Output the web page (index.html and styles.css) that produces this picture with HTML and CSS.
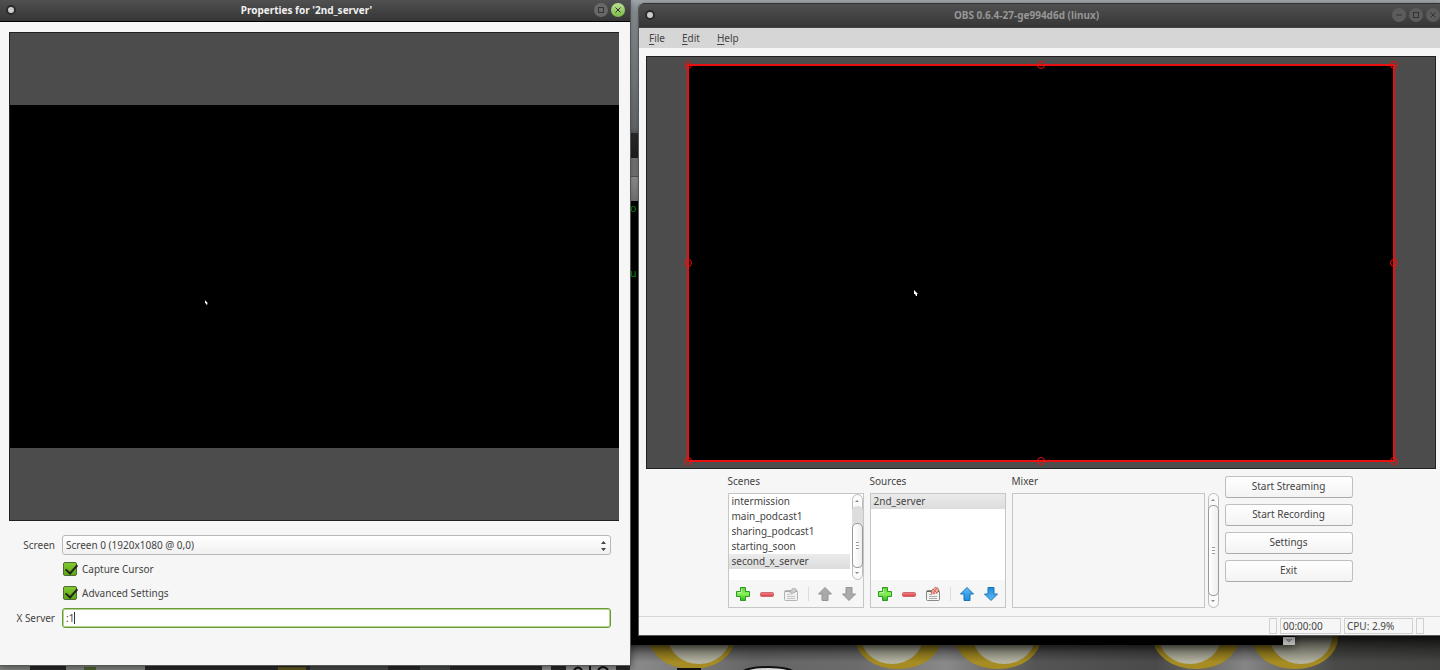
FILE: index.html
```html
<!DOCTYPE html>
<html lang="en">
<head>
<meta charset="utf-8">
<title>OBS 0.6.4-27-ge994d6d (linux)</title>
<meta name="viewport" content="width=device-width, initial-scale=1">
<link rel="stylesheet" href="styles.css">
</head>
<body>
<svg width="0" height="0" class="defs" aria-hidden="true">
  <defs>
    <linearGradient id="green" x1="0" y1="0" x2="0" y2="1"><stop offset="0" stop-color="#5fd23a"/><stop offset=".5" stop-color="#8af05a"/><stop offset="1" stop-color="#2fb81c"/></linearGradient>
    <linearGradient id="red" x1="0" y1="0" x2="0" y2="1"><stop offset="0" stop-color="#f08a8a"/><stop offset="1" stop-color="#dc3a40"/></linearGradient>
    <linearGradient id="blue" x1="0" y1="0" x2="0" y2="1"><stop offset="0" stop-color="#5cbcf4"/><stop offset="1" stop-color="#1d8be0"/></linearGradient>
    <symbol id="plus" viewBox="0 0 16 16"><path d="M5.500 1.500h5v4h4v5h-4v4h-5v-4h-4v-5h4z" fill="url(#green)" stroke="#2c9a20"/><path d="M6.500 3v3.500H3" fill="none" stroke="#b5f79a"/></symbol>
    <symbol id="minus" viewBox="0 0 16 16"><rect x="1.500" y="6.500" width="13" height="4" rx="1" fill="url(#red)" stroke="#cf6a70"/></symbol>
    <symbol id="props" viewBox="0 0 16 16"><rect x="1.500" y="4.500" width="13" height="10" rx="1" fill="#f3f3f3" stroke="#888"/><path d="M2 5.500h12" stroke="#666"/><path d="M4 8.500h3M4 10.500h8M4 12.500h8" stroke="#aaa"/><path d="M6 7l2-4 3-2 3 2-2 4-4 1z" fill="#f3b5a5" stroke="#b5624c" stroke-dasharray="2 1"/><path d="M8 3l4 4M12 2L8 7" stroke="#d9604c"/></symbol>
    <symbol id="props-off" viewBox="0 0 16 16"><rect x="1.500" y="4.500" width="13" height="10" rx="1" fill="#f1f1f1" stroke="#b4b4b4"/><path d="M2 5.500h12" stroke="#aaa"/><path d="M4 8.500h3M4 10.500h8M4 12.500h8" stroke="#c4c4c4"/><path d="M7 6l2-3 2-1 3 2-3 3-3 1z" fill="#ccc" stroke="#a4a4a4" stroke-dasharray="2 1"/></symbol>
    <symbol id="arrow" viewBox="0 0 16 16"><path d="M8 1.500L14.500 8H11v6.500H5V8H1.500z"/></symbol>
  </defs>
</svg>

<main class="desktop">
  <svg class="wallpaper" viewBox="0 0 1440 670" preserveAspectRatio="xMidYMax slice" aria-hidden="true">
    <defs>
      <linearGradient id="wall" x1="0" x2="0" y1="0" y2="1"><stop offset="0" stop-color="#a4acb2"/><stop offset=".2" stop-color="#747a80"/><stop offset="1" stop-color="#686868"/></linearGradient>
      <linearGradient id="floor" x1="630" x2="1440" y1="0" y2="0" gradientUnits="userSpaceOnUse"><stop offset="0" stop-color="#8d8c8d"/><stop offset=".15" stop-color="#666"/><stop offset=".28" stop-color="#6b6b6b"/><stop offset=".39" stop-color="#8a898a"/><stop offset=".5" stop-color="#555"/><stop offset=".65" stop-color="#4a4a4a"/><stop offset=".76" stop-color="#858585"/><stop offset=".87" stop-color="#4a4a48"/><stop offset="1" stop-color="#444442"/></linearGradient>
      <linearGradient id="shade" x1="0" x2="0" y1="0" y2="1"><stop offset="0" stop-color="#000" stop-opacity=".7"/><stop offset="1" stop-color="#000" stop-opacity="0"/></linearGradient>
    </defs>
    <rect width="1440" height="670" fill="url(#wall)"/>
    <rect x="630" y="636" width="810" height="34" fill="url(#floor)"/>
    <g fill="#a68c22">
      <ellipse cx="692" cy="638" rx="43" ry="31"/><ellipse cx="898" cy="638" rx="43" ry="31"/><ellipse cx="998" cy="638" rx="43" ry="31"/><ellipse cx="1196" cy="638" rx="43" ry="31"/><ellipse cx="1295" cy="638" rx="43" ry="31"/>
    </g>
    <g fill="#b4b3a1">
      <ellipse cx="699" cy="637" rx="31" ry="27"/><ellipse cx="892" cy="637" rx="31" ry="27"/><ellipse cx="1004" cy="637" rx="31" ry="27"/><ellipse cx="1190" cy="637" rx="31" ry="27"/><ellipse cx="1301" cy="637" rx="31" ry="27"/>
    </g>
    <rect x="630" y="636" width="810" height="26" fill="url(#shade)"/>
    <rect x="677" y="668" width="24" height="2" fill="#111"/>
    <ellipse cx="768" cy="673" rx="26" ry="6" fill="#ddd" stroke="#111" stroke-width="2"/>
    <rect y="664" width="630" height="6" fill="#2b2c2c"/>
    <path d="M0 666h30v4H0zM66 666h79v4H66z" fill="#8b8f8a"/><path d="M84 667h12v3H84z" fill="#536b32"/>
    <path d="M278 667h28v3h-28z" fill="#655b21"/><path d="M310 666h78v4h-78zM420 666h30v4h-30z" fill="#4c4e4e"/>
    <path d="M542 666h9v4h-9zM566 666h50v4h-50z" fill="#9a9a9a"/><path d="M574 670q4-5 8 0M590 666v4M598 670q5-6 10 0" fill="none" stroke="#111" stroke-width="2"/>
  </svg>

  <section class="terminal" aria-label="Terminal">
    <div class="terminal-title"></div>
    <div class="terminal-menu"></div>
    <div class="terminal-tabs"></div>
    <div class="terminal-screen"><span>o</span><span>u</span></div>
    <svg class="terminal-arrow" viewBox="0 0 12 8" aria-hidden="true"><rect width="12" height="8" fill="#bbb"/><path d="M3 2l3 3 3-3" fill="#888" stroke="#777"/></svg>
  </section>

  <section class="window properties" aria-labelledby="props-title">
    <header class="titlebar">
      <span class="dot"></span>
      <h1 id="props-title">Properties for '2nd_server'</h1>
      <div class="controls">
        <button type="button" class="control" aria-label="Maximize"><svg viewBox="0 0 14 14"><rect x="4.500" y="4.500" width="5" height="5"/></svg></button>
        <button type="button" class="control close" aria-label="Close"><svg viewBox="0 0 14 14"><path d="M4.500 4.500l5 5M9.500 4.500l-5 5"/></svg></button>
      </div>
    </header>
    <div class="preview preview-wide">
      <div class="screen">
        <svg class="pointer small" viewBox="0 0 4 6" aria-hidden="true"><path d="M0 0l4 4H3v2H2L1 4H0z" fill="#fff"/></svg>
      </div>
    </div>
    <form class="form">
      <label for="screen" class="field-label">Screen</label>
      <div class="select-wrap">
        <select id="screen"><option>Screen 0 (1920x1080 @ 0,0)</option></select>
        <svg class="spin" viewBox="0 0 7 12" aria-hidden="true"><path d="M1 4l2.500-3L6 4zM1 8l2.500 3L6 8z" fill="#444"/></svg>
      </div>
      <label class="check"><input type="checkbox" checked><span>Capture Cursor</span></label>
      <label class="check"><input type="checkbox" checked><span>Advanced Settings</span></label>
      <label for="server" class="field-label">X Server</label>
      <div class="text-wrap"><input id="server" type="text" value=":1"><i class="caret"></i></div>
    </form>
  </section>

  <section class="window obs" aria-labelledby="obs-title">
    <header class="titlebar">
      <span class="dot"></span>
      <h1 id="obs-title">OBS 0.6.4-27-ge994d6d (linux)</h1>
      <div class="controls">
        <button type="button" class="control" aria-label="Minimize"><svg viewBox="0 0 14 14"><path d="M4 7h6"/></svg></button>
        <button type="button" class="control" aria-label="Maximize"><svg viewBox="0 0 14 14"><rect x="4.500" y="4.500" width="5" height="5"/></svg></button>
        <button type="button" class="control" aria-label="Close"><svg viewBox="0 0 14 14"><path d="M4.500 4.500l5 5M9.500 4.500l-5 5"/></svg></button>
      </div>
    </header>
    <nav class="menubar">
      <button type="button"><u>F</u>ile</button>
      <button type="button"><u>E</u>dit</button>
      <button type="button"><u>H</u>elp</button>
    </nav>
    <div class="preview preview-tall">
      <div class="screen selected">
        <i class="handle nw"></i><i class="handle n"></i><i class="handle ne"></i><i class="handle w"></i>
        <i class="handle e"></i><i class="handle sw"></i><i class="handle s"></i><i class="handle se"></i>
        <svg class="pointer" viewBox="0 0 4 6" aria-hidden="true"><path d="M0 0l4 4H3v2H2L1 4H0z" fill="#fff"/></svg>
      </div>
    </div>
    <div class="docks">
      <section class="dock">
        <h2>Scenes</h2>
        <div class="panel">
          <div class="list-area">
            <ul class="list"><li>intermission</li><li>main_podcast1</li><li>sharing_podcast1</li><li>starting_soon</li><li class="current">second_x_server</li></ul>
            <div class="scrollbar"><i class="tri up"></i><div class="track"><div class="thumb scenes-thumb"></div></div><i class="tri down"></i></div>
          </div>
          <div class="toolbar">
            <button type="button" aria-label="Add scene"><svg><use href="#plus"/></svg></button>
            <button type="button" aria-label="Remove scene"><svg><use href="#minus"/></svg></button>
            <button type="button" aria-label="Scene properties" disabled><svg><use href="#props-off"/></svg></button>
            <i class="separator"></i>
            <button type="button" aria-label="Move scene up" disabled><svg class="arrow"><use href="#arrow"/></svg></button>
            <button type="button" aria-label="Move scene down" disabled><svg class="arrow flip"><use href="#arrow"/></svg></button>
          </div>
        </div>
      </section>
      <section class="dock">
        <h2>Sources</h2>
        <div class="panel">
          <div class="list-area">
            <ul class="list"><li class="current">2nd_server</li></ul>
          </div>
          <div class="toolbar">
            <button type="button" aria-label="Add source"><svg><use href="#plus"/></svg></button>
            <button type="button" aria-label="Remove source"><svg><use href="#minus"/></svg></button>
            <button type="button" aria-label="Source properties"><svg><use href="#props"/></svg></button>
            <i class="separator"></i>
            <button type="button" aria-label="Move source up"><svg class="arrow blue"><use href="#arrow"/></svg></button>
            <button type="button" aria-label="Move source down"><svg class="arrow blue flip"><use href="#arrow"/></svg></button>
          </div>
        </div>
      </section>
      <section class="dock mixer">
        <h2>Mixer</h2>
        <div class="mixer-area">
          <div class="panel"></div>
          <div class="scrollbar"><i class="tri up"></i><div class="track"><div class="thumb"></div></div><i class="tri down"></i></div>
        </div>
      </section>
      <div class="actions">
        <button type="button">Start Streaming</button>
        <button type="button">Start Recording</button>
        <button type="button">Settings</button>
        <button type="button">Exit</button>
      </div>
    </div>
    <footer class="statusbar">
      <span class="cell slim"></span><span class="cell time">00:00:00</span><span class="cell cpu">CPU: 2.9%</span><span class="cell slim"></span>
    </footer>
  </section>
</main>
</body>
</html>
```

FILE: styles.css
```css
* { box-sizing: border-box; }

body {
  margin: 0;
  font: 10px/16px "Noto Sans", "Open Sans", sans-serif;
  color: #444;
}

button, input, select { font: inherit; color: inherit; margin: 0; }
button { padding: 0; border: 0; background: none; }
h1, h2, ul { margin: 0; padding: 0; font-size: inherit; list-style: none; }
.defs { position: absolute; }

.desktop {
  position: relative;
  height: 100vh;
  min-height: 560px;
  overflow: hidden;
  background: #686868;
}

.wallpaper { position: absolute; inset: 0; width: 100%; height: 100%; }

/* Windows */
.window {
  position: absolute;
  display: flex;
  flex-direction: column;
  background: #f6f6f6;
  border: 1px solid #555855;
  border-top: 0;
  box-shadow: 0 2px 8px rgba(0, 0, 0, .5);
}

.properties { top: 0; bottom: 4px; left: -1px; width: calc(43.75% + 2px); }
.obs { top: 3px; bottom: 34px; left: calc(44.375% - 1px); right: -5px; border-radius: 5px 5px 0 0; }

.titlebar {
  display: grid;
  grid-template-columns: 60px 1fr 78px;
  align-items: center;
  flex: none;
  height: 22px;
  padding: 0 5px 1px 6px;
  color: #f0f0f0;
  background: linear-gradient(#505050, #363636);
  border-bottom: 1px solid #000;
}
.titlebar h1 { text-align: center; white-space: nowrap; }
.obs .titlebar {
  grid-template-columns: 60px 1fr 92px;
  height: 25px;
  padding-right: 4px;
  color: #969696;
  border-top: 1px solid #333;
  border-bottom-color: #444;
  border-radius: 5px 5px 0 0;
}

.dot {
  width: 10px;
  height: 10px;
  border: 2px solid #2a2a2a;
  border-radius: 50%;
  background: #ccc;
}
.controls { display: flex; justify-content: flex-end; gap: 3px; }
.control { width: 14px; height: 14px; border-radius: 50%; background: #686868; }
.control svg { display: block; width: 14px; height: 14px; fill: none; stroke: #333; }
.obs .control { background: #5c5c5c; }
.properties .close { background: linear-gradient(#b9df92, #7dbb48); }

.menubar {
  display: flex;
  gap: 17px;
  flex: none;
  height: 20px;
  padding: 2px 10px;
  background: #d6d6d6;
}
.menubar u { text-underline-offset: 2px; }

/* Previews */
.preview {
  display: flex;
  align-items: center;
  justify-content: center;
  flex: 1;
  min-height: 0;
  background: #4c4c4c;
  border: 1px solid #222;
}
.preview-wide { margin: 10px 11px 0 9px; border-width: 1px 0 1px 1px; }
.preview-tall { margin: 8px 8px 0 7px; }
.screen { position: relative; aspect-ratio: 16 / 9; background: #000; }
.preview-wide .screen { width: 100%; }
.preview-tall .screen { height: calc(100% - 13px); }
.selected { border: 2px solid #e81010; }

.handle {
  position: absolute;
  width: 8px;
  height: 8px;
  margin: -4px;
  border: 1px solid #f01010;
  border-radius: 4px;
}
.nw, .n, .ne { top: -1px; }
.w, .e { top: 50%; }
.sw, .s, .se { top: calc(100% + 1px); }
.nw, .w, .sw { left: -1px; }
.n, .s { left: 50%; }
.ne, .e, .se { left: calc(100% + 1px); }

.pointer { position: absolute; left: 32%; top: 57%; width: 4px; height: 6px; }
.pointer.small { width: 3px; height: 5px; }

/* Properties form */
.form {
  display: grid;
  grid-template-columns: 46px 1fr;
  grid-template-rows: 20px 26px 27px 20px;
  column-gap: 7px;
  align-items: center;
  flex: none;
  padding: 14px 19px 37px 9px;
}
.field-label { text-align: right; white-space: nowrap; }
.select-wrap, .text-wrap { position: relative; display: flex; }
.select-wrap select {
  width: 100%;
  height: 20px;
  padding: 0 3px;
  appearance: none;
  border: 1px solid #b8b8b8;
  border-radius: 3px;
  background: linear-gradient(#fff, #f0f0f0);
}
.spin { position: absolute; right: 4px; top: 5px; width: 7px; height: 12px; }

.check { grid-column: 2; align-self: end; display: flex; align-items: center; gap: 5px; height: 24px; padding-left: 1px; }
.check + .check { align-self: start; }
.check input {
  width: 14px;
  height: 14px;
  appearance: none;
  border: 1px solid #4f6b35;
  border-radius: 2px;
  background: linear-gradient(#83c832, #5ca812);
  position: relative;
}
.check input:checked::after {
  content: "";
  position: absolute;
  left: 4px;
  top: -1px;
  width: 5px;
  height: 10px;
  border: solid #222;
  border-width: 0 2px 2px 0;
  transform: rotate(42deg);
}
.text-wrap input {
  width: 100%;
  height: 20px;
  padding: 0 3px;
  border: 1px solid #6a9a35;
  border-radius: 3px;
  background: #fff;
  box-shadow: inset 0 0 0 1px #b4d38c;
  outline: 0;
}
.caret { position: absolute; left: 12px; top: 4px; width: 1px; height: 12px; background: #333; }

/* Docks */
.docks { display: flex; justify-content: center; gap: 6px; flex: none; padding: 4px 3px 8px 0; }
.dock { width: 136px; }
.dock h2 { height: 20px; font-weight: 400; }
.panel { height: 115px; border: 1px solid #c6c6c6; }
.list-area { display: flex; height: 86px; background: #fff; }
.list { flex: 1; }
.list li { height: 15px; padding-left: 3px; line-height: 14px; white-space: nowrap; }
.list .current { background: linear-gradient(#ebebeb, #dcdcdc); }
.list-area .scrollbar { margin-left: 2px; }

.scrollbar {
  display: flex;
  flex-direction: column;
  align-items: center;
  width: 11px;
  border: 1px solid #bbb;
  border-radius: 6px;
  background: #fafafa;
}
.track { display: flex; flex-direction: column; justify-content: flex-end; flex: 1; width: 11px; border-radius: 5px; background: #ddd; }
.thumb {
  height: 100%;
  border: 1px solid #999;
  border-radius: 5px;
  background: repeating-linear-gradient(#999 0 1px, #fff 1px 3px) center / 3px 7px no-repeat, linear-gradient(90deg, #fff, #eee);
}
.scenes-thumb { height: 72%; }
.tri { width: 4px; height: 2px; margin: 5px 0 4px; background: #888; clip-path: polygon(50% 0, 100% 100%, 0 100%); }
.tri.down { margin: 4px 0 5px; clip-path: polygon(0 0, 100% 0, 50% 100%); }

.toolbar { display: flex; align-items: center; justify-content: space-between; height: 27px; padding: 0 5px 0 6px; }
.toolbar button, .toolbar svg { display: block; width: 16px; height: 16px; }
.separator { width: 1px; height: 14px; background: #ddd; }
.arrow { fill: #aaa; stroke: #939393; }
.arrow.blue { fill: url(#blue); stroke: #1d72b4; }
.flip { transform: rotate(180deg); }

.mixer { width: 207px; }
.mixer-area { display: flex; gap: 3px; }
.mixer-area .panel { flex: 1; }

.actions { display: flex; flex-direction: column; gap: 6px; width: 128px; padding-top: 3px; }
.actions button {
  height: 22px;
  padding-bottom: 2px;
  border: 1px solid #c0c0c0;
  border-bottom-color: #aaa;
  border-radius: 3px;
  background: linear-gradient(#fff, #f3f3f3);
}

.statusbar {
  display: flex;
  justify-content: flex-end;
  gap: 3px;
  flex: none;
  height: 19px;
  padding: 1px 20px 1px 0;
  border-top: 1px solid #d6d6d6;
}
.cell { height: 16px; padding-left: 2px; border: 1px solid #d0d0d0; line-height: 14px; }
.slim { width: 8px; }
.time { width: 61px; }
.cpu { width: 69px; }

/* Terminal behind the windows */
.terminal { position: absolute; left: 40%; right: 10.100%; top: 133px; bottom: 25px; background: #000; box-shadow: 0 2px 8px rgba(0, 0, 0, .5); }
.terminal-title { height: 25px; background: linear-gradient(#333, #222); }
.terminal-menu { height: 19px; background: #888; border-bottom: 1px solid #666; }
.terminal-tabs { height: 24px; background: linear-gradient(#aaa, #888); }
.terminal-screen { display: flex; flex-direction: column; gap: 49px; padding-left: 54px; color: #10a010; font-family: "DejaVu Sans Mono", monospace; font-size: 11px; }
.terminal-arrow { position: absolute; right: 0; bottom: 0; width: 12px; height: 8px; }
```
